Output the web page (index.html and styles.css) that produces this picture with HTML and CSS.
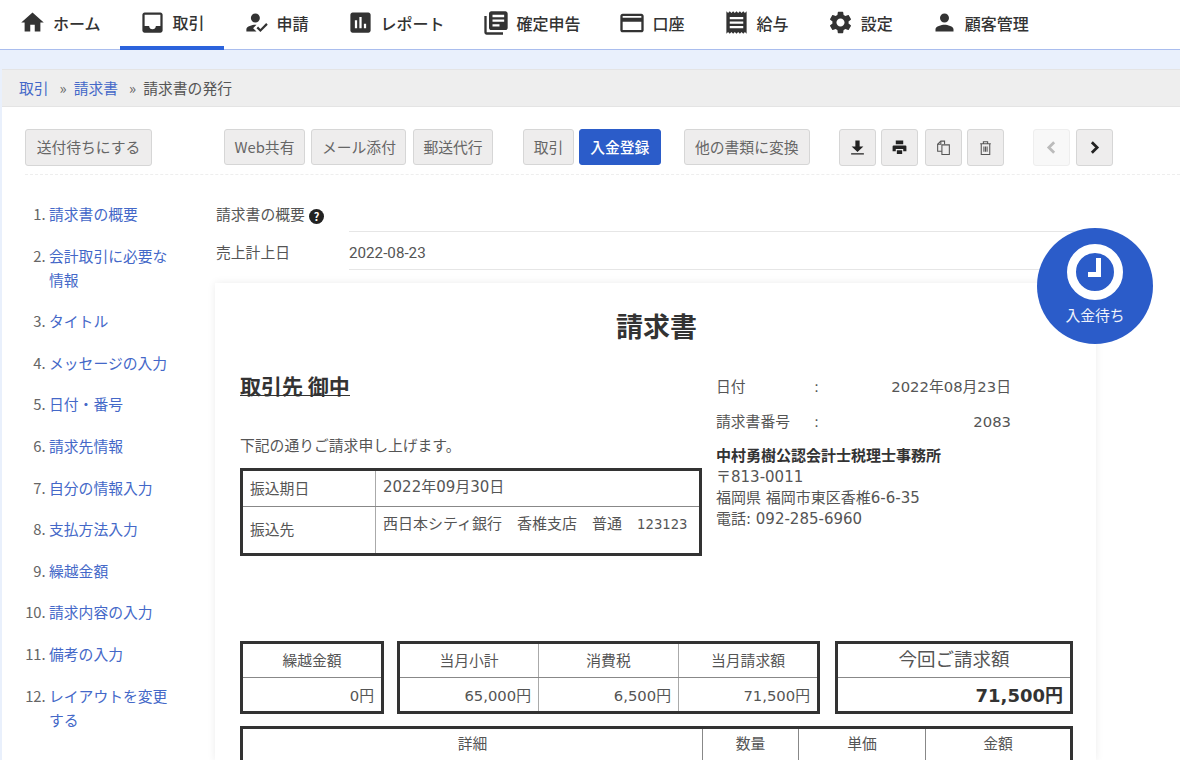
FILE: index.html
```html
<!DOCTYPE html>
<html lang="ja">
<head>
    <meta charset="UTF-8">
    <meta name="viewport" content="width=device-width, initial-scale=1.0">
    <title>請求書の発行</title>
    <link rel="stylesheet" href="styles.css">
</head>
<body>
    <nav class="gnav">
        <a class="gnav_item"><svg viewBox="0 0 24 24"><path d="M10 20v-6h4v6h5v-8h3L12 3 2 12h3v8z"/></svg>ホーム</a>
        <a class="gnav_item on"><svg viewBox="0 0 24 24"><path d="M19 3H5c-1.1 0-2 .9-2 2v14c0 1.1.9 2 2 2h14c1.1 0 2-.9 2-2V5c0-1.1-.9-2-2-2zm0 12h-4c0 1.66-1.35 3-3 3s-3-1.34-3-3H5V5h14v10z"/></svg>取引</a>
        <a class="gnav_item"><svg viewBox="0 0 24 24"><path d="M9 17l3-2.94c-.39-.04-.68-.06-1-.06-2.67 0-8 1.34-8 4v2h9l-3-3zm2-5c2.21 0 4-1.79 4-4s-1.79-4-4-4-4 1.79-4 4 1.79 4 4 4m4.47 8.5L12 17l1.4-1.41 2.07 2.08 5.13-5.17 1.4 1.41z"/></svg>申請</a>
        <a class="gnav_item"><svg viewBox="0 0 24 24"><path d="M19 3H5c-1.1 0-2 .9-2 2v14c0 1.1.9 2 2 2h14c1.1 0 2-.9 2-2V5c0-1.1-.9-2-2-2zM9 17H7v-7h2v7zm4 0h-2V7h2v10zm4 0h-2v-4h2v4z"/></svg>レポート</a>
        <a class="gnav_item"><svg class="wide" viewBox="0 0 24 24"><path d="M4 6H2v14c0 1.1.9 2 2 2h14v-2H4V6zm16-4H8c-1.1 0-2 .9-2 2v12c0 1.1.9 2 2 2h12c1.1 0 2-.9 2-2V4c0-1.1-.9-2-2-2zm-1 9H9V9h10v2zm-4 4H9v-2h6v2zm4-8H9V5h10v2z"/></svg>確定申告</a>
        <a class="gnav_item"><svg class="wide" viewBox="0 0 24 24"><path d="M20 4H4c-1.11 0-1.99.89-1.99 2L2 18c0 1.11.89 2 2 2h16c1.11 0 2-.89 2-2V6c0-1.11-.89-2-2-2zm0 14H4v-7h16v7zm0-10.500H4V6h16v1.500z"/></svg>口座</a>
        <a class="gnav_item"><svg viewBox="0 0 24 24"><path d="M18 17H6v-2h12v2zm0-4H6v-2h12v2zm0-4H6V7h12v2zM3 22l1.5-1.5L6 22l1.5-1.5L9 22l1.5-1.5L12 22l1.5-1.5L15 22l1.5-1.5L18 22l1.5-1.5L21 22V2l-1.5 1.5L18 2l-1.5 1.5L15 2l-1.5 1.5L12 2l-1.5 1.5L9 2 7.5 3.5 6 2 4.5 3.5 3 2v20z"/></svg>給与</a>
        <a class="gnav_item"><svg viewBox="0 0 24 24"><path d="M19.14 12.94c.04-.3.06-.61.06-.94 0-.32-.02-.64-.07-.94l2.03-1.58c.18-.14.23-.41.12-.61l-1.92-3.32c-.12-.22-.37-.29-.59-.22l-2.39.96c-.5-.38-1.03-.7-1.62-.94L14.4 2.81c-.04-.24-.24-.41-.48-.41h-3.84c-.24 0-.43.17-.47.41L9.25 5.35c-.59.24-1.13.57-1.62.94l-2.39-.96c-.22-.08-.47 0-.59.22L2.74 8.87c-.12.21-.08.47.12.61l2.03 1.58c-.05.3-.09.63-.09.94s.02.64.07.94l-2.03 1.58c-.18.14-.23.41-.12.61l1.92 3.32c.12.22.37.29.59.22l2.39-.96c.5.38 1.03.7 1.62.94l.36 2.54c.05.24.24.41.48.41h3.84c.24 0 .44-.17.47-.41l.36-2.54c.59-.24 1.13-.56 1.62-.94l2.39.96c.22.08.47 0 .59-.22l1.92-3.32c.12-.22.07-.47-.12-.61l-2.01-1.58zM12 15.6c-1.98 0-3.6-1.62-3.6-3.6s1.62-3.6 3.6-3.6 3.6 1.62 3.6 3.6-1.62 3.6-3.6 3.6z"/></svg>設定</a>
        <a class="gnav_item"><svg viewBox="0 0 24 24"><path d="M12 12c2.21 0 4-1.79 4-4s-1.79-4-4-4-4 1.79-4 4 1.79 4 4 4zm0 2c-2.67 0-8 1.34-8 4v2h16v-2c0-2.66-5.33-4-8-4z"/></svg>顧客管理</a>
    </nav>
    <div class="strip"></div>
    <div class="crumb">
        <a>取引</a><span class="sep">»</span><a>請求書</a><span class="sep">»</span><span>請求書の発行</span>
    </div>

    <div class="page">
        <div class="toolbar">
            <button class="btn first">送付待ちにする</button>
            <div class="group g1">
                <button class="btn">Web共有</button>
                <button class="btn">メール添付</button>
                <button class="btn">郵送代行</button>
            </div>
            <div class="group g2">
                <button class="btn">取引</button>
                <button class="btn primary">入金登録</button>
            </div>
            <button class="btn convert">他の書類に変換</button>
            <div class="group g3">
                <button class="btn icon"><svg viewBox="0 0 16 16"><path d="M6 1.500h4v5.500h3.500L8 12.300 2.500 7H6zM2 13.300h12v1.200H2z"/></svg></button>
                <button class="btn icon"><svg viewBox="0 0 16 16"><path d="M4.500 1.500h7v3.500h-7zM2.500 6h11a1 1 0 0 1 1 1v4.500h-3V9.500h-7v2h-3V7a1 1 0 0 1 1-1zM5.500 10.500h5V14h-5z"/></svg></button>
                <button class="btn icon"><svg viewBox="0 0 16 16" class="line"><path d="M6.500 11.500h-4V5l3-3h3.500v3"/><path d="M6.500 5.500h7v9h-7z"/><path d="M5.500 2v3h-3"/></svg></button>
                <button class="btn icon"><svg viewBox="0 0 16 16" class="line"><path d="M3 4.500h10M6 4.500V2.500h4v2M4 4.500V14.500h8V4.500M6.500 7v5M8 7v5M9.500 7v5"/></svg></button>
            </div>
            <div class="group g4">
                <button class="btn icon off"><svg viewBox="0 0 16 16" class="chev"><path d="M10.500 3l-5 5 5 5"/></svg></button>
                <button class="btn icon"><svg viewBox="0 0 16 16" class="chev"><path d="M5.500 3l5 5-5 5"/></svg></button>
            </div>
        </div>

        <div class="content">
            <ol class="side">
                <li><a>請求書の概要</a></li>
                <li><a>会計取引に必要な情報</a></li>
                <li><a>タイトル</a></li>
                <li><a>メッセージの入力</a></li>
                <li><a>日付・番号</a></li>
                <li><a>請求先情報</a></li>
                <li><a>自分の情報入力</a></li>
                <li><a>支払方法入力</a></li>
                <li><a>繰越金額</a></li>
                <li><a>請求内容の入力</a></li>
                <li><a>備考の入力</a></li>
                <li><a>レイアウトを変更する</a></li>
            </ol>
            <div class="main">
                <div class="field head">
                    <div class="label">請求書の概要 <span class="help">?</span></div>
                    <div class="value"></div>
                </div>
                <div class="field">
                    <div class="label">売上計上日</div>
                    <div class="value">2022-08-23</div>
                </div>

                <div class="paper">
                    <h1 class="title">請求書</h1>
                    <div class="upper">
                        <div class="upper_l">
                            <h2 class="to">取引先 御中</h2>
                            <p class="lead">下記の通りご請求申し上げます。</p>
                            <table class="doc pay">
                                <tr><td class="w1">振込期日</td><td class="top">2022年09月30日</td></tr>
                                <tr class="tall"><td class="w1">振込先</td><td class="top">西日本シティ銀行　香椎支店　普通　<span class="acc">123123</span></td></tr>
                            </table>
                        </div>
                        <div class="upper_r">
                            <dl class="meta"><dt>日付</dt><dd class="colon">:</dd><dd class="val">2022年08月23日</dd></dl>
                            <dl class="meta"><dt>請求書番号</dt><dd class="colon">:</dd><dd class="val">2083</dd></dl>
                            <address class="office">
                                <strong>中村勇樹公認会計士税理士事務所</strong>
                                〒813-0011<br>
                                福岡県 福岡市東区香椎6-6-35<br>
                                電話: 092-285-6960
                            </address>
                        </div>
                    </div>

                    <div class="summary">
                        <table class="doc s1">
                            <tr><th>繰越金額</th></tr>
                            <tr><td class="num">0円</td></tr>
                        </table>
                        <table class="doc s2">
                            <tr><th>当月小計</th><th>消費税</th><th>当月請求額</th></tr>
                            <tr><td class="num">65,000円</td><td class="num">6,500円</td><td class="num">71,500円</td></tr>
                        </table>
                        <table class="doc s3">
                            <tr><th>今回ご請求額</th></tr>
                            <tr><td class="num">71,500円</td></tr>
                        </table>
                    </div>

                    <table class="doc detail">
                        <tr><th>詳細</th><th class="d2">数量</th><th class="d3">単価</th><th class="d4">金額</th></tr>
                    </table>
                </div>
            </div>
        </div>
    </div>

    <div class="badge">
        <svg viewBox="0 0 56 56"><circle cx="28" cy="28" r="23.500" fill="none" stroke="#fff" stroke-width="9"/><path d="M29 14h5v19H21v-5h8z" fill="#fff"/></svg>
        <span>入金待ち</span>
    </div>
</body>
</html>
```

FILE: styles.css
```css
* {
    margin: 0;
    padding: 0;
    box-sizing: border-box;
}

html, body {
    height: 760px;
    overflow: hidden;
}
body {
    position: relative;
    background-color: #e9f0fc;
    color: #555;
    font-family: "Noto Sans CJK JP", "Noto Sans", sans-serif;
    font-size: 14.800px;
}
a {
    color: #4468c8;
}

/* gnav */
.gnav {
    display: flex;
    height: 50px;
    background-color: #fff;
    border-bottom: 1px solid #a9bdee;
}
.gnav_item {
    display: flex;
    align-items: center;
    gap: 7px;
    height: 49px;
    padding: 0 19px 4px 20px;
    color: #333;
    font-size: 16px;
    font-weight: 500;
    white-space: nowrap;
}
.gnav_item svg {
    width: 27px;
    height: 27px;
    margin-left: -1px;
    fill: #333;
    flex-shrink: 0;
}
.gnav_item svg.wide {
    width: 28px;
    height: 28px;
    margin-left: -2px;
}
.gnav_item.on {
    height: 50px;
    padding-bottom: 2px;
    border-bottom: 4px solid #2b63dc;
}

.strip {
    height: 19px;
}
.crumb {
    display: flex;
    align-items: center;
    height: 38px;
    margin-left: 2px;
    padding: 0 0 2px 17px;
    background-color: #eee;
    border-top: 1px solid #e4e4e4;
    border-bottom: 1px solid #e4e4e4;
    color: #555;
}
.crumb .sep {
    margin: 0 7px 0 11px;
    color: #666;
}

.page {
    height: 653px;
    margin-left: 2px;
    background-color: #fff;
}

/* toolbar */
.toolbar {
    display: flex;
    align-items: flex-start;
    margin-left: 23px;
    height: 68px;
    padding-top: 22px;
    border-bottom: 1px dashed #eee;
}
.group {
    display: flex;
    gap: 6px;
}
.btn {
    height: 36px;
    padding: 0 9.500px 2px;
    border: 1px solid #d6d6d6;
    border-radius: 3px;
    background-color: #eeeded;
    color: #666;
    font-family: inherit;
    font-size: 14.800px;
    white-space: nowrap;
}
.btn.first {
    width: 127px;
    height: 37px;
    padding: 0 0 2px;
}
.btn.primary {
    width: 82px;
    padding: 0 0 2px;
    border-color: #2b5cc9;
    background-color: #2b5cc9;
    color: #fff;
    font-weight: 500;
}
.btn.convert {
    width: 126px;
    padding: 0 0 2px;
    margin-left: 23px;
}
.btn.icon {
    display: flex;
    align-items: center;
    justify-content: center;
    width: 37px;
    height: 37px;
    padding: 0;
}
.btn.icon svg {
    width: 17px;
    height: 17px;
    fill: #222;
}
.btn.icon svg.line {
    fill: none;
    stroke: #555;
    stroke-width: 1;
}
.btn.icon svg.chev {
    fill: none;
    stroke: #222;
    stroke-width: 2.600;
}
.btn.off {
    background-color: #f8f8f8;
    border-color: #eee;
}
.btn.off svg.chev {
    stroke: #bbb;
}
.g1 {
    margin-left: 72px;
    gap: 6.500px;
}
.g2 {
    margin-left: 30px;
    gap: 5px;
}
.g3 {
    margin-left: 29px;
    gap: 5px;
}
.g3 .btn:nth-child(3) {
    margin-left: 2px;
}
.g4 {
    margin-left: 29px;
}

/* content */
.content {
    display: flex;
}
.side {
    flex: 0 0 212px;
    padding: 27px 43px 0 47px;
    line-height: 24px;
}
.side li {
    margin-bottom: 17.600px;
    color: #666;
}
.main {
    flex: 0 0 882px;
}
.field {
    display: flex;
    height: 38px;
    align-items: center;
    padding-left: 2px;
}
.field.head {
    margin-top: 19px;
    height: 38px;
}
.label {
    flex: 0 0 133px;
    color: #555;
}
.help {
    display: inline-block;
    width: 15px;
    height: 15px;
    margin-left: 1px;
    border-radius: 50%;
    background-color: #222;
    color: #fff;
    font-size: 11px;
    font-weight: 700;
    line-height: 15px;
    text-align: center;
    vertical-align: -1px;
}
.value {
    flex: 1;
    align-self: stretch;
    display: flex;
    align-items: center;
    padding-top: 4px;
    border-bottom: 1px solid #e6e6e6;
    color: #555;
    font-family: Roboto, sans-serif;
    font-size: 15.200px;
}

/* paper */
.paper {
    height: 478px;
    margin: 13px 0 0 1px;
    padding: 0 23px 0 25px;
    background-color: #fff;
    box-shadow: 0 0 8px rgba(0, 0, 0, 0.08);
    font-family: "DejaVu Sans", "Noto Sans CJK JP", sans-serif;
}
.title {
    padding-top: 22px;
    color: #333;
    font-family: "Noto Sans CJK JP", sans-serif;
    font-size: 27px;
    font-weight: 700;
    line-height: 42px;
    text-align: center;
}
.upper {
    display: flex;
    height: 266px;
    margin-top: 28px;
}
.upper_l {
    flex: 0 0 476px;
}
.upper_r {
    flex: 1;
}
.to {
    display: inline-block;
    color: #333;
    font-family: "Noto Sans CJK JP", sans-serif;
    font-size: 21px;
    font-weight: 700;
    line-height: 20px;
    border-bottom: 1px solid #333;
    padding-bottom: 0;
}
.lead {
    margin-top: 38px;
    line-height: 22px;
}
.doc {
    border: 3px solid #333;
    border-collapse: collapse;
    table-layout: fixed;
}
.doc td, .doc th {
    border: 1px solid #888;
    font-weight: 400;
    color: #555;
}
.pay {
    width: 462px;
    margin-top: 11px;
}
.pay tr {
    height: 37px;
}
.pay tr.tall {
    height: 48px;
}
.pay td {
    padding: 0 7px 3px;
    white-space: nowrap;
}
.pay td.w1 {
    border-right-color: #aaa;
}
.pay td.top {
    vertical-align: top;
    padding-top: 5px;
    font-size: 15px;
    line-height: 24px;
}
.pay tr:first-child td.top {
    padding-top: 4px;
}
.pay .w1 {
    width: 134px;
}
.acc {
    font-size: 13.200px;
}
.meta {
    display: flex;
    width: 295px;
    height: 34.500px;
    line-height: 24px;
}
.meta dt {
    flex: 0 0 98px;
}
.meta .colon {
    flex: 0 0 20px;
}
.meta .val {
    flex: 1;
    text-align: right;
}
.office {
    font-size: 15px;
    font-style: normal;
    line-height: 21px;
}
.office strong {
    display: block;
    margin-bottom: 2px;
    font-family: "Noto Sans CJK JP", sans-serif;
    color: #333;
    font-weight: 700;
}

/* summary */
.summary {
    display: flex;
    align-items: flex-start;
}
.summary table {
    height: 72px;
}
.summary tr {
    height: 35px;
}
.summary th {
    padding-bottom: 3px;
}
.summary td {
    padding-bottom: 1px;
}
.summary .num {
    padding-right: 7px;
    text-align: right;
}
.s2 th, .s2 td {
    border-left-color: #aaa;
    border-right-color: #aaa;
}
.s2 th:nth-child(3), .s2 td:nth-child(3) {
    border-left-color: #333;
}
.s1 {
    width: 144px;
}
.s2 {
    width: 423px;
    margin-left: 13px;
}
.s3 {
    width: 238px;
    margin-left: 15px;
}
.s3 th {
    padding-bottom: 5px;
    font-size: 18.500px;
}
.s3 .num {
    color: #333;
    font-size: 18px;
    font-weight: 700;
}
.detail {
    width: 833px;
    margin-top: 12px;
}
.detail tr {
    height: 40px;
}
.detail th {
    padding-bottom: 10px;
    border-top: 0;
}
.d2 {
    width: 96px;
    border-left-color: #aaa !important;
}
.d3 {
    width: 127px;
    border-left-color: #777 !important;
}
.d4 {
    width: 146px;
    border-left-color: #444 !important;
}

/* status badge */
.badge {
    position: absolute;
    left: 1037px;
    top: 228px;
    width: 116px;
    height: 116px;
    padding-top: 16px;
    border-radius: 50%;
    background-color: #2b5cc9;
    color: #eef2fb;
    text-align: center;
}
.badge svg {
    display: block;
    width: 56px;
    height: 56px;
    margin: 0 auto;
}
.badge span {
    display: block;
    margin-top: 4px;
    line-height: 22px;
}
```
